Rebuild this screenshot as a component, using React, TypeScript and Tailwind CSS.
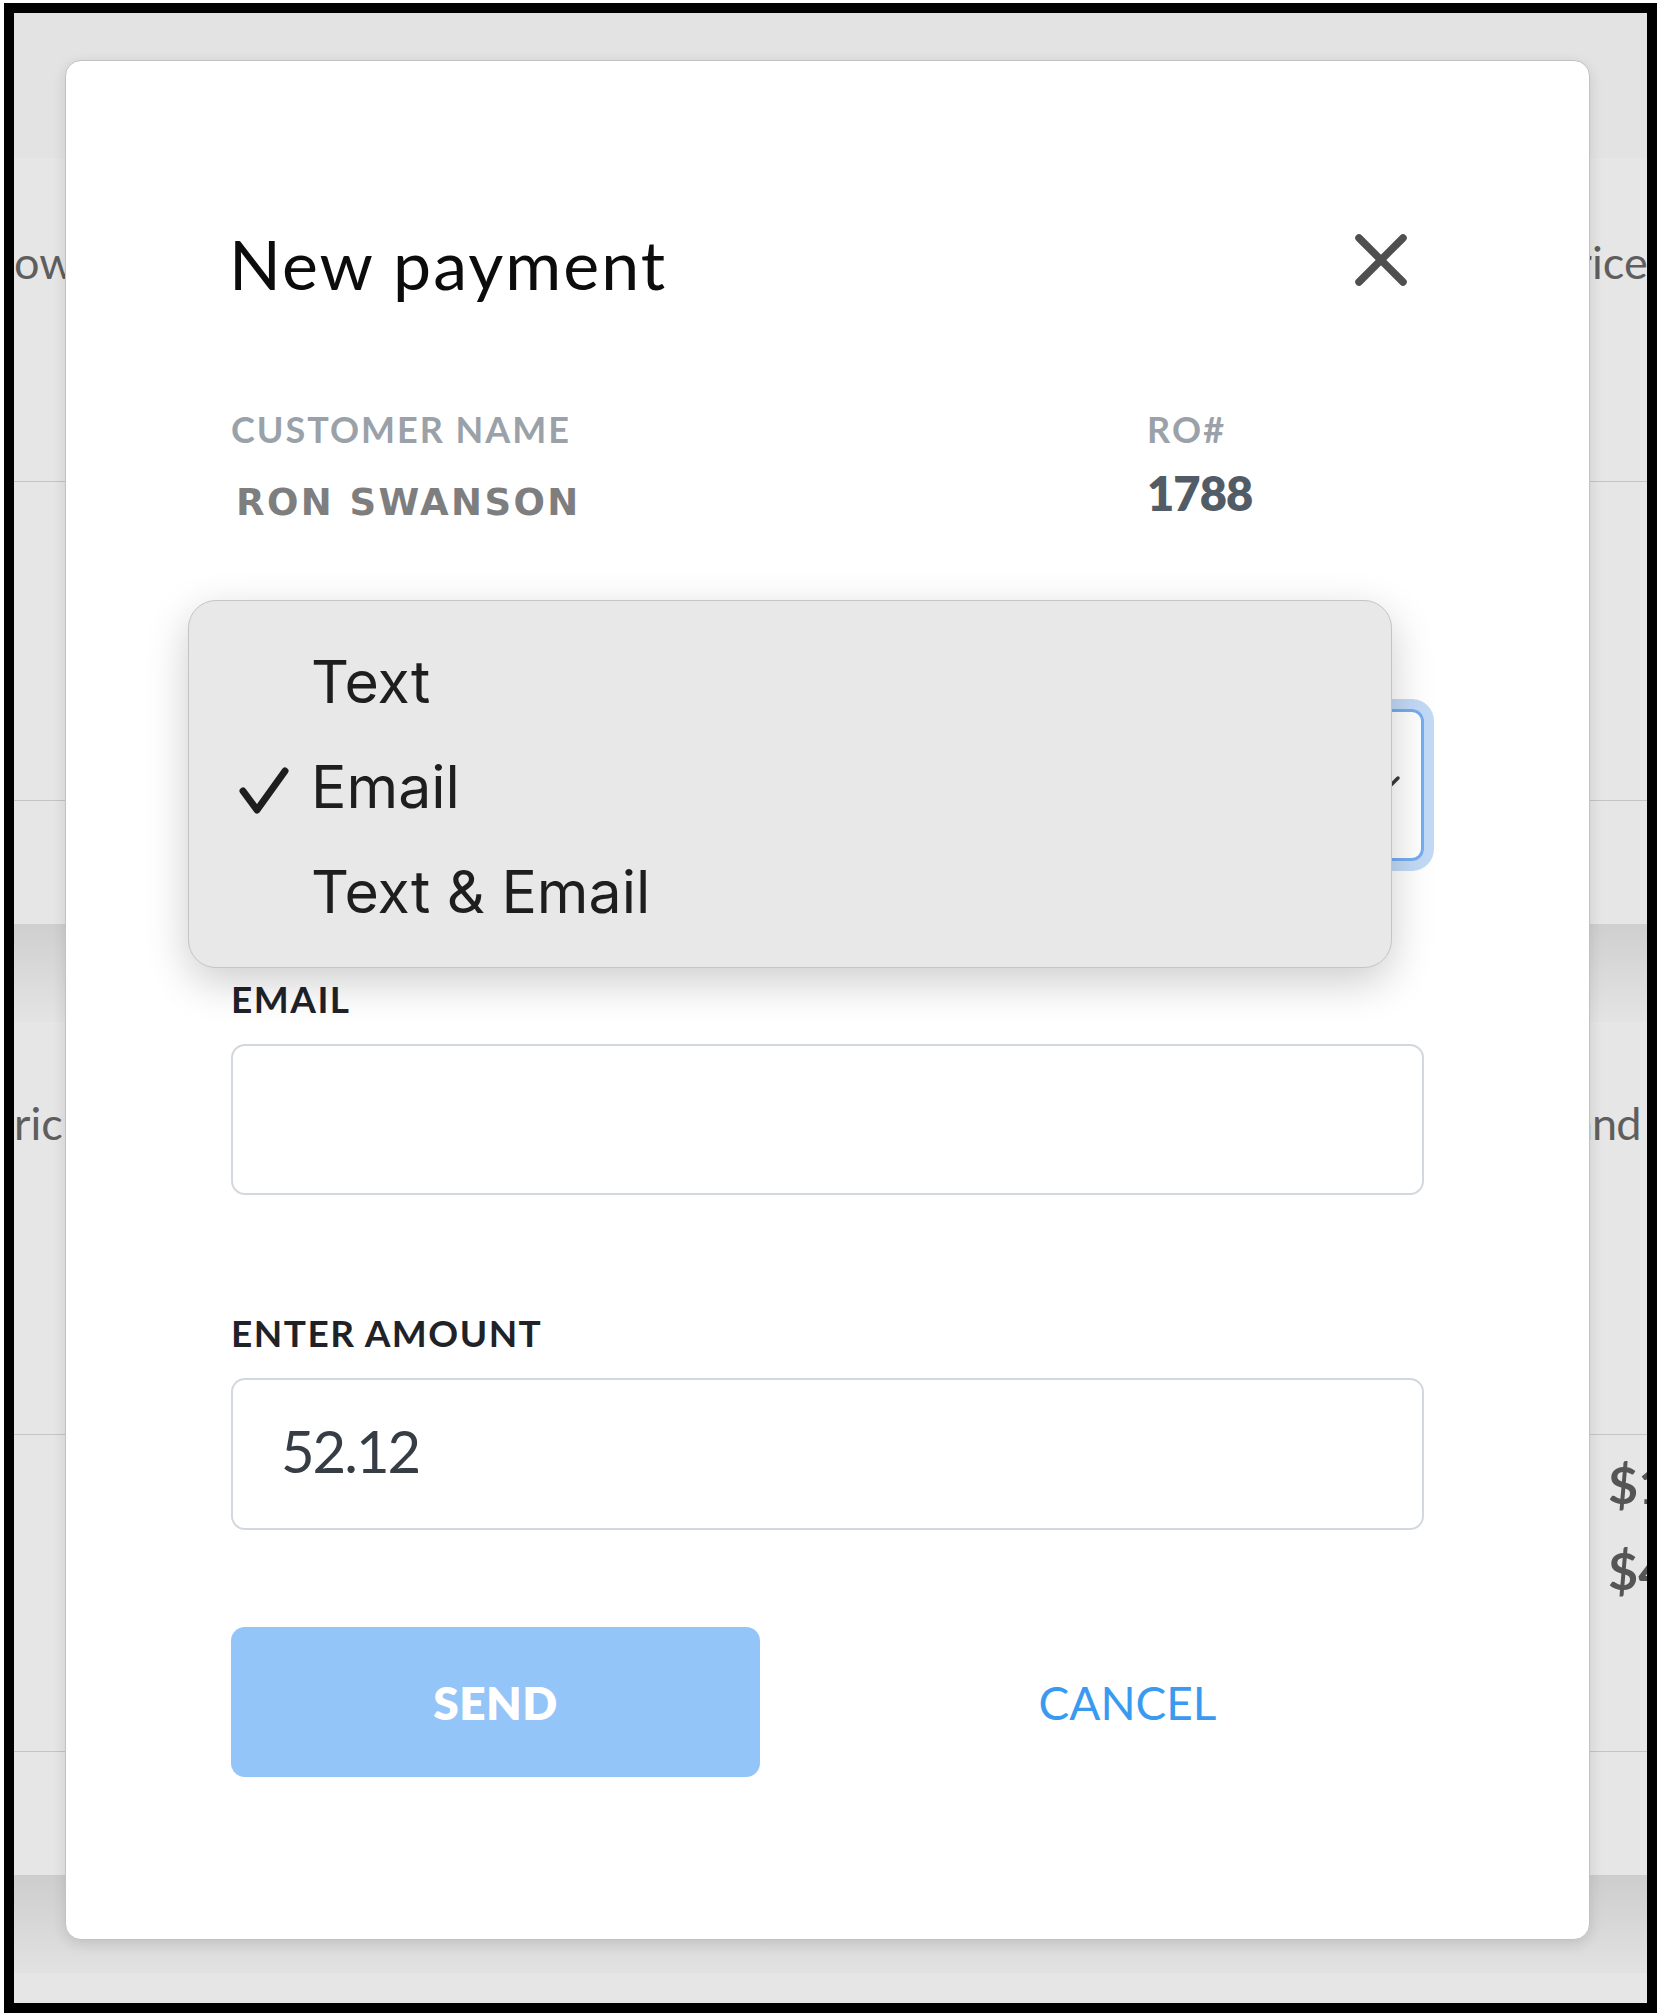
import React from "react";

const lato = { fontFamily: "Lato, 'Noto Sans', sans-serif" };

function CloseIcon() {
  return (
    <svg width="54" height="54" viewBox="0 0 54 54" className="block">
      <path d="M5 5 L49 49 M49 5 L5 49" stroke="#4f4f4f" strokeWidth="7.5" strokeLinecap="round" fill="none" />
    </svg>
  );
}

function CheckIcon() {
  return (
    <svg width="52" height="50" viewBox="0 0 52 50" className="block">
      <path d="M5 26 L19 45 L47 6" stroke="#1e1e1e" strokeWidth="7" strokeLinecap="round" strokeLinejoin="round" fill="none" />
    </svg>
  );
}

function Chevron() {
  return (
    <svg width="32" height="20" viewBox="0 0 32 20" className="block">
      <path d="M3 3 L16 16 L29 3" stroke="#3b3b3b" strokeWidth="3.5" strokeLinecap="round" strokeLinejoin="round" fill="none" />
    </svg>
  );
}

const options = [
  { label: "Text", checked: false },
  { label: "Email", checked: true },
  { label: "Text & Email", checked: false },
];

function SendViaMenu() {
  return (
    <div className="absolute left-[-43px] top-[-109px] z-10 w-[1204px] rounded-[28px] border border-[#c4c4c4] bg-[#e8e8e8] pb-[23px] pt-[28px] shadow-[0_14px_44px_rgba(0,0,0,0.2)]">
      {options.map((opt) => (
        <div
          key={opt.label}
          className="flex h-[105px] items-center text-[59px] leading-[105px] text-[#1e1e1e]"
          style={{ fontFamily: "Inter, 'Noto Sans', sans-serif" }}
        >
          <div className="flex w-[122px] shrink-0 justify-end pr-[21px] pt-[6px]">
            {opt.checked && <CheckIcon />}
          </div>
          <span>{opt.label}</span>
        </div>
      ))}
    </div>
  );
}

function PaymentModal() {
  return (
    <div
      className="absolute left-[51px] top-[47px] z-20 w-[1525px] rounded-[16px] border border-[#c2c2c2] bg-white px-[165px] pb-[162px] pt-[169px] shadow-[0_4px_14px_rgba(0,0,0,0.12)]"
      style={lato}
    >
      <div className="flex items-start justify-between">
        <h1 className="-ml-[2px] text-[68px] font-normal leading-[68px] tracking-[0.03em] text-[#0c0c0c]">New payment</h1>
        <button className="mr-[16px] mt-[3px]">
          <CloseIcon />
        </button>
      </div>

      <div className="mt-[113px] flex">
        <div className="w-[916px] shrink-0">
          <p className="text-[36px] font-bold leading-[36px] tracking-[0.055em] text-[#9aa1a8]">CUSTOMER NAME</p>
          <p
            className="ml-[5px] mt-[37px] text-[37px] font-bold leading-[37px] tracking-[0.065em] text-[#7e7e7e]"
            style={{ fontFamily: "'DejaVu Sans', Lato, sans-serif" }}
          >
            RON SWANSON
          </p>
        </div>
        <div>
          <p className="text-[36px] font-bold leading-[36px] tracking-[0.06em] text-[#9aa1a8]">RO#</p>
          <p className="mt-[23px] text-[47px] font-extrabold leading-[47px] tracking-[-0.02em] text-[#525c67]">1788</p>
        </div>
      </div>

      <div className="relative mt-[188px]">
        <div className="flex h-[152px] items-center justify-end rounded-[12px] border-[3px] border-[#76adf1] pr-[20px] ring-[10px] ring-[#c3daf7]">
          <Chevron />
        </div>
        <SendViaMenu />
      </div>

      <p className="mt-[119px] text-[37px] font-bold leading-[37px] tracking-[0.04em] text-[#1f2328]">EMAIL</p>
      <div className="mt-[27px] h-[151px] rounded-[14px] border-2 border-[#d3d8de] bg-white" />

      <p className="mt-[119px] text-[37px] font-bold leading-[37px] tracking-[0.04em] text-[#1f2328]">ENTER AMOUNT</p>
      <div className="mt-[27px] flex h-[152px] items-center rounded-[14px] border-2 border-[#d3d8de] bg-white pb-[6px] pl-[48px]">
        <span className="text-[58px] leading-[70px] tracking-[-0.035em] text-[#363d45]">52.12</span>
      </div>

      <div className="mt-[97px] flex items-center">
        <button className="flex h-[150px] w-[529px] items-center justify-center rounded-[14px] bg-[#94c5f8] text-[46px] font-extrabold tracking-[0.01em] text-white">
          SEND
        </button>
        <button className="ml-[103px] flex h-[150px] w-[529px] items-center justify-center text-[46px] font-normal text-[#3a9af0]">
          CANCEL
        </button>
      </div>
    </div>
  );
}

// a word whose head sits under the modal or outside the frame: the head ends where the wrapper starts
function SplitWord({ head, tail, className }: { head: string; tail: string; className: string }) {
  return (
    <div className="w-0 shrink-0">
      <div className={`flex whitespace-nowrap ${className}`}>
        <div className="flex w-0 shrink-0 justify-end">
          <span>{head}</span>
        </div>
        <span>{tail}</span>
      </div>
    </div>
  );
}

function BackgroundPage() {
  const word = "text-[45px] leading-[45px] text-[#5e5e5e]";
  return (
    <div className="flex flex-col" style={lato}>
      <div className="h-[145px] bg-[#e3e3e3]" />
      <div className="flex h-[324px] items-start border-b border-[#c4c4c4] bg-[#e6e6e6] pt-[82px]">
        <SplitWord head="Sh" tail="ow" className={word} />
        <div className="w-[1578px] shrink-0" />
        <SplitWord head="Pr" tail="ice" className={word} />
      </div>
      <div className="h-[319px] border-b border-[#c4c4c4] bg-[#e6e6e6]" />
      <div className="h-[123px] bg-[#e6e6e6]" />
      <div className="h-[98px] bg-gradient-to-b from-[#cfcfcf] to-[#e4e4e4]" />
      <div className="flex h-[413px] items-start border-b border-[#c4c4c4] bg-[#e6e6e6] pt-[79px]">
        <SplitWord head="Elect" tail="ric" className={word} />
        <div className="w-[1578px] shrink-0" />
        <SplitWord head="a" tail="nd the" className={`tracking-[-0.02em] ${word}`} />
      </div>
      <div className="flex h-[317px] border-b border-[#c4c4c4] bg-[#e6e6e6] pt-[6px]">
        <div className="w-[1594px] shrink-0" />
        <div className="text-[52px] font-bold leading-[86px] text-[#555555]">
          <p>$12.00</p>
          <p>$40.12</p>
        </div>
      </div>
      <div className="h-[123px] bg-[#e6e6e6]" />
      <div className="h-[98px] bg-gradient-to-b from-[#cdcdcd] to-[#e2e2e2]" />
      <div className="h-[30px] bg-[#e6e6e6]" />
    </div>
  );
}

export default function App() {
  return (
    <div className="h-[2016px] w-[1659px] bg-white pb-[3px] pl-[4px] pr-[2px] pt-[3px]">
      <div className="h-[2010px] w-[1653px] border-[10px] border-black">
        <div className="relative h-full w-full overflow-hidden bg-[#e6e6e6]">
          <BackgroundPage />
          <PaymentModal />
        </div>
      </div>
    </div>
  );
}
